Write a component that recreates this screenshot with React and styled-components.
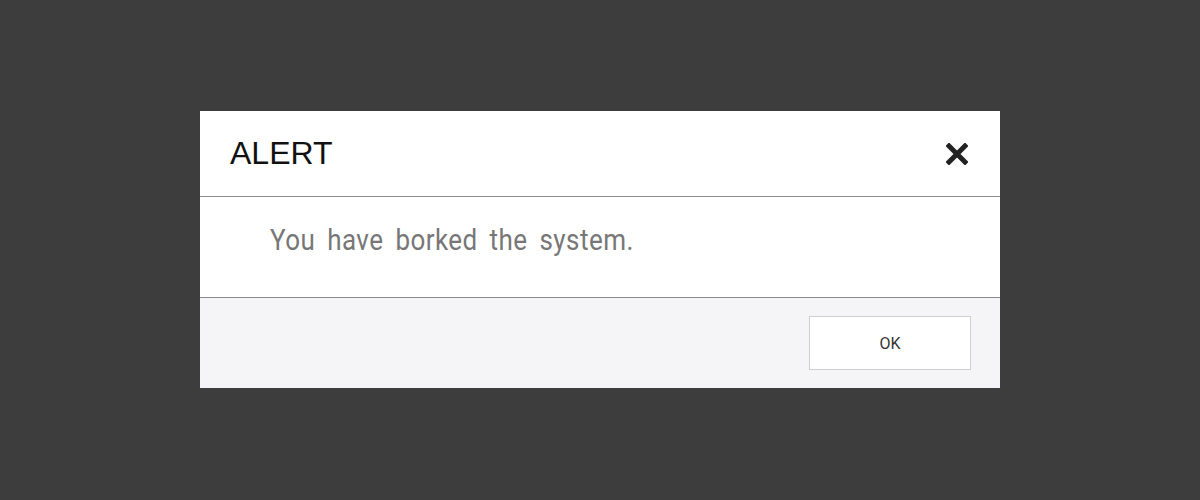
import React from 'react';
import styled, { createGlobalStyle } from 'styled-components';

const GlobalStyle = createGlobalStyle`
  html, body {
    margin: 0;
    padding: 0;
    background: #3d3d3d;
  }
`;

const Backdrop = styled.div`
  width: 1200px;
  height: 500px;
  background: #3d3d3d;
  display: flex;
  justify-content: center;
  padding-top: 111px;
  box-sizing: border-box;
`;

const Dialog = styled.div`
  width: 800px;
  height: 277px;
  background: #fff;
  display: flex;
  flex-direction: column;
`;

const Header = styled.div`
  height: 85px;
  display: flex;
  align-items: center;
  justify-content: space-between;
  padding: 0 32px 0 30px;
  border-bottom: 1px solid #8a8a8a;
  box-sizing: content-box;
`;

const Title = styled.h3`
  margin: 0;
  font-family: "Liberation Sans", Arial, sans-serif;
  font-weight: 400;
  font-size: 32px;
  color: #111;
`;

const CloseButton = styled.button`
  background: none;
  border: none;
  padding: 0;
  width: 22px;
  height: 22px;
  display: flex;
  cursor: pointer;
`;

const Body = styled.div`
  height: 101px;
  padding: 28px 70px 0;
  border-bottom: 1px solid #8a8a8a;
  box-sizing: border-box;
`;

const Message = styled.p`
  margin: 0;
  font-family: Roboto, "Noto Sans", sans-serif;
  font-size: 26px;
  line-height: 1;
  color: #777;
  word-spacing: 5px;
  letter-spacing: 0.45px;
  transform: scaleY(1.135);
  transform-origin: left top;
`;

const Footer = styled.div`
  flex: 1;
  background: #f5f5f7;
  display: flex;
  align-items: center;
  justify-content: flex-end;
  padding: 0 29px 0 0;
`;

const Button = styled.button`
  width: 162px;
  height: 54px;
  background: #fff;
  border: 1px solid #cfcfcf;
  font-family: Roboto, "Noto Sans", sans-serif;
  font-size: 16px;
  color: #333;
  cursor: pointer;
`;

export default function App() {
  return (
    <>
      <GlobalStyle />
      <Backdrop>
        <Dialog>
          <Header>
            <Title>ALERT</Title>
            <CloseButton aria-label="Close">
              <svg width="22" height="22" viewBox="0 0 22 22">
                <path d="M3 3L19 19M19 3L3 19" stroke="#222" strokeWidth="5" strokeLinecap="square" />
              </svg>
            </CloseButton>
          </Header>
          <Body>
            <Message>You have borked the system.</Message>
          </Body>
          <Footer>
            <Button>OK</Button>
          </Footer>
        </Dialog>
      </Backdrop>
    </>
  );
}
